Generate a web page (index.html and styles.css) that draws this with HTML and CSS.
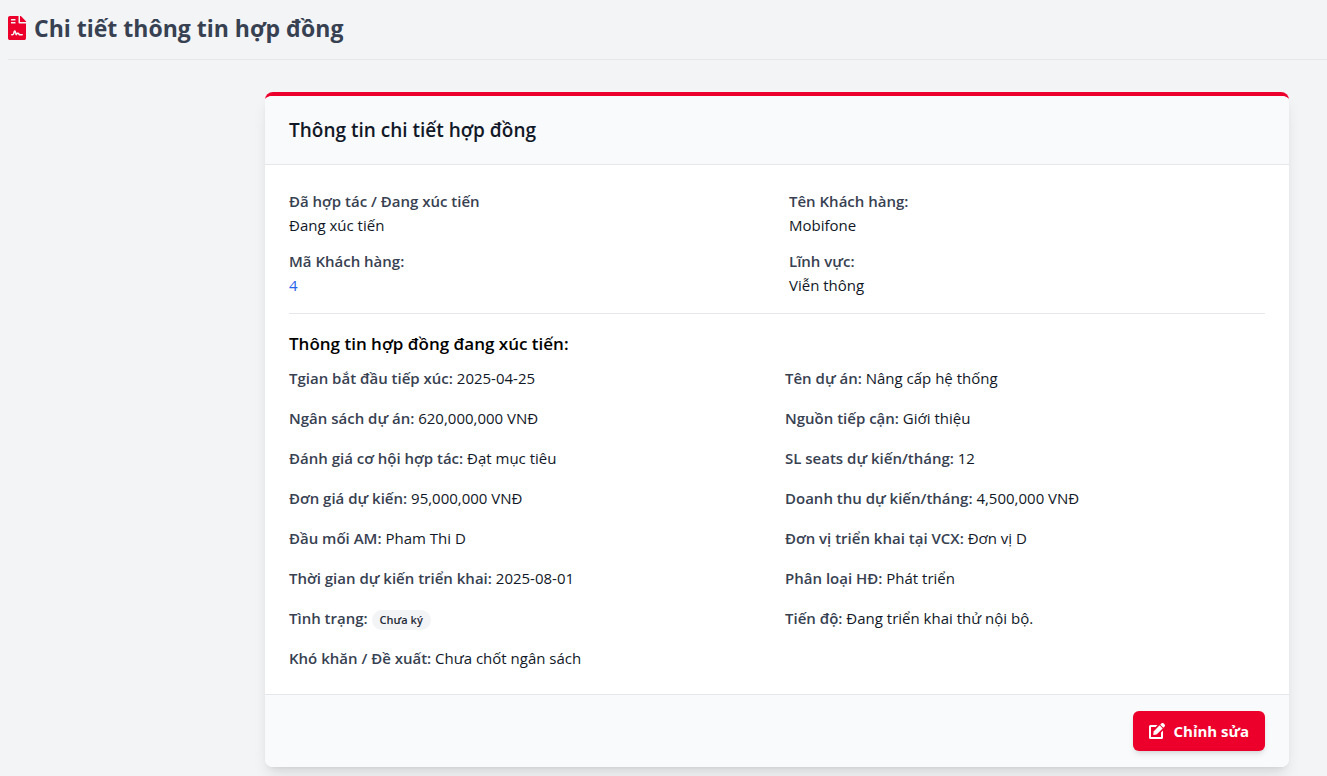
FILE: index.html
```html
<!DOCTYPE html>
<html lang="vi">
<head>
<meta charset="utf-8">
<meta name="viewport" content="width=device-width, initial-scale=1">
<title>Chi tiết thông tin hợp đồng</title>
<link rel="stylesheet" href="styles.css">
</head>
<body>
<header class="page-header">
  <svg class="page-icon" viewBox="0 0 384 512" aria-hidden="true"><path fill="currentColor" d="M224 136V0H40C18 0 0 18 0 40v432c0 22 18 40 40 40h304c22 0 40-18 40-40V160H248c-13.2 0-24-10.8-24-24zM64 72c0-4.42 3.58-8 8-8h80c4.42 0 8 3.58 8 8v16c0 4.42-3.58 8-8 8H72c-4.42 0-8-3.58-8-8V72zm0 64c0-4.42 3.58-8 8-8h80c4.42 0 8 3.58 8 8v16c0 4.42-3.58 8-8 8H72c-4.42 0-8-3.58-8-8v-16zm192.81 248H304c8.84 0 16 7.16 16 16s-7.16 16-16 16h-47.19c-16.45 0-31.5-9.14-38.64-23.18-2.94-5.92-8.09-6.52-10.17-6.52s-7.23.59-10.02 6.19l-7.67 15.34a15.986 15.986 0 0 1-14.31 8.84c-.38 0-.75-.02-1.14-.05-6.45-.45-12-4.75-14.03-10.89L144 354.59l-10.61 31.88c-5.89 17.66-22.38 29.53-41 29.53H80c-8.84 0-16-7.16-16-16s7.16-16 16-16h12.39c4.83 0 9.11-3.08 10.64-7.66l18.19-54.64c3.3-9.81 12.44-16.41 22.78-16.41s19.48 6.59 22.77 16.41l13.88 41.64c19.77-16.19 54.05-9.7 66 14.16 2.02 4.06 5.96 6.5 10.16 6.5zM377 105L279.1 7c-4.5-4.5-10.6-7-17-7H256v128h128v-6.1c0-6.3-2.5-12.4-7-16.9z"/></svg>
  <h1 class="page-title">Chi tiết thông tin hợp đồng</h1>
</header>
<main class="content">
  <article class="card">
    <div class="card-header"><h2 class="card-title">Thông tin chi tiết hợp đồng</h2></div>
    <div class="card-body">
      <dl class="summary">
        <div><dt>Đã hợp tác / Đang xúc tiến</dt><dd>Đang xúc tiến</dd></div>
        <div><dt>Tên Khách hàng:</dt><dd>Mobifone</dd></div>
        <div><dt>Mã Khách hàng:</dt><dd><a class="link" href="#">4</a></dd></div>
        <div><dt>Lĩnh vực:</dt><dd>Viễn thông</dd></div>
      </dl>
      <h3 class="section-title">Thông tin hợp đồng đang xúc tiến:</h3>
      <div class="details">
        <p><strong>Tgian bắt đầu tiếp xúc:</strong> 2025-04-25</p>
        <p><strong>Tên dự án:</strong> Nâng cấp hệ thống</p>
        <p><strong>Ngân sách dự án:</strong> 620,000,000 VNĐ</p>
        <p><strong>Nguồn tiếp cận:</strong> Giới thiệu</p>
        <p><strong>Đánh giá cơ hội hợp tác:</strong> Đạt mục tiêu</p>
        <p><strong>SL seats dự kiến/tháng:</strong> 12</p>
        <p><strong>Đơn giá dự kiến:</strong> 95,000,000 VNĐ</p>
        <p><strong>Doanh thu dự kiến/tháng:</strong> 4,500,000 VNĐ</p>
        <p><strong>Đầu mối AM:</strong> Pham Thi D</p>
        <p><strong>Đơn vị triển khai tại VCX:</strong> Đơn vị D</p>
        <p><strong>Thời gian dự kiến triển khai:</strong> 2025-08-01</p>
        <p><strong>Phân loại HĐ:</strong> Phát triển</p>
        <p><strong>Tình trạng:</strong> <span class="badge">Chưa ký</span></p>
        <p><strong>Tiến độ:</strong> Đang triển khai thử nội bộ.</p>
        <p><strong>Khó khăn / Đề xuất:</strong> Chưa chốt ngân sách</p>
      </div>
    </div>
    <div class="card-footer">
      <button class="button" type="button">
        <svg class="button-icon" viewBox="0 0 16 16" aria-hidden="true"><g fill="currentColor"><path d="M1.5 2H8.5L6.7 4H2V14H12V9.4L14 7.5V14.5A1.5 1.5 0 0 1 12.5 16H1.5A1.5 1.5 0 0 1 0 14.5V3.5A1.5 1.5 0 0 1 1.5 2z"/><path d="M10.6 2.3L13.7 5.4L7.6 11.5L4.2 12L4.6 8.4z"/><path d="M11.2 1.7L12.3 .6A1.7 1.7 0 0 1 14.8 .6L15.4 1.2A1.7 1.7 0 0 1 15.4 3.7L14.3 4.8z"/></g></svg>
        Chỉnh sửa
      </button>
    </div>
  </article>
</main>
</body>
</html>
```
FILE: styles.css
```css
* { box-sizing: border-box; margin: 0; padding: 0; }

body {
  padding: 12px 0 9px 8px;
  background: #f3f4f6;
  color: #111827;
  font-family: "Segoe UI", "Open Sans", "Noto Sans", sans-serif;
  font-size: 15px;
  line-height: 24px;
}

.page-header {
  display: flex;
  align-items: center;
  gap: 8px;
  padding-bottom: 15px;
  border-bottom: 1px solid #e5e7eb;
}
.page-icon { width: 18px; height: 24px; color: #ec002b; }
.page-title { color: #374151; font-size: 23px; font-weight: 700; line-height: 32px; }

.content {
  display: flex;
  justify-content: flex-end;
  padding: 32px 38px 0 0;
}

.card {
  width: 100%;
  max-width: 1024px;
  overflow: hidden;
  background: #fff;
  border-top: 4px solid #ec002b;
  border-radius: 8px;
  box-shadow: 0 10px 15px -3px rgba(0, 0, 0, .1), 0 4px 6px -4px rgba(0, 0, 0, .1);
}
.card-header {
  padding: 20px 24px;
  background: #f9fafb;
  border-bottom: 1px solid #e5e7eb;
}
.card-title { font-size: 19px; font-weight: 600; line-height: 28px; }
.card-body { padding: 24px; }

.summary {
  display: grid;
  grid-template-columns: 1fr 1fr;
  gap: 12px 24px;
  padding-bottom: 16px;
  border-bottom: 1px solid #e5e7eb;
}
.summary dt, .details strong { color: #374151; font-weight: 600; }
.link { color: #2563eb; text-decoration: none; }

.section-title {
  margin: 16px 0 8px;
  color: #000;
  font-size: 17px;
  font-weight: 600;
  line-height: 28px;
}
.details {
  display: grid;
  grid-template-columns: 1fr 1fr;
  grid-auto-rows: minmax(24px, auto);
  gap: 16px;
}
.badge {
  display: inline-block;
  padding: 2px 8px;
  background: #f3f4f6;
  color: #1f2937;
  border-radius: 10px;
  font-size: 11px;
  font-weight: 600;
  line-height: 16px;
}

.card-footer {
  display: flex;
  justify-content: flex-end;
  padding: 16px 24px;
  background: #f9fafb;
  border-top: 1px solid #e5e7eb;
}
.button {
  display: flex;
  align-items: center;
  gap: 8px;
  padding: 8px 16px;
  border: 0;
  border-radius: 6px;
  background: #ec002b;
  color: #fff;
  box-shadow: 0 4px 6px -1px rgba(0, 0, 0, .1), 0 2px 4px -2px rgba(0, 0, 0, .1);
  font: 700 15px/24px "Segoe UI", "Open Sans", "Noto Sans", sans-serif;
  cursor: pointer;
}
.button-icon { width: 16px; height: 16px; }
```
